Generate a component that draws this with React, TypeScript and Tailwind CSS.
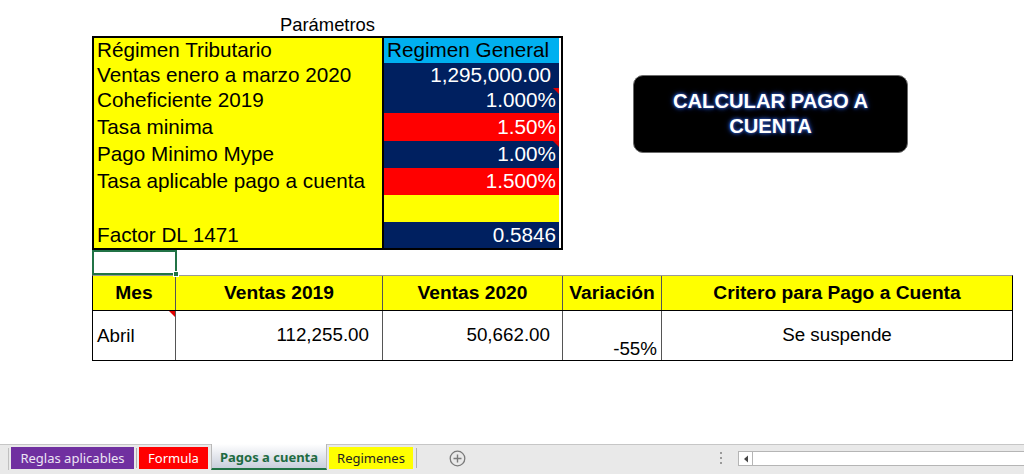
import React from "react";

type Row = {
  label: string;
  value: string;
  h: string;
  bg: string;
  fg: string;
  align: string;
  pr: string;
  comment?: boolean;
};

const rows: Row[] = [
  { label: "Régimen Tributario", value: "Regimen General", h: "h-[25px]", bg: "bg-[#00b0f0]", fg: "text-black", align: "justify-start pl-[3px]", pr: "" },
  { label: "Ventas enero a marzo 2020", value: "1,295,000.00", h: "h-[25px]", bg: "bg-[#002060]", fg: "text-white", align: "justify-end", pr: "pr-[8px]" },
  { label: "Coheficiente 2019", value: "1.000%", h: "h-[25px]", bg: "bg-[#002060]", fg: "text-white", align: "justify-end", pr: "pr-[3px]", comment: true },
  { label: "Tasa minima", value: "1.50%", h: "h-[28px]", bg: "bg-[#ff0000]", fg: "text-white", align: "justify-end", pr: "pr-[3px]" },
  { label: "Pago Minimo Mype", value: "1.00%", h: "h-[27px]", bg: "bg-[#002060]", fg: "text-white", align: "justify-end", pr: "pr-[3px]", comment: true },
  { label: "Tasa aplicable pago a cuenta", value: "1.500%", h: "h-[27px]", bg: "bg-[#ff0000]", fg: "text-white", align: "justify-end", pr: "pr-[3px]" },
  { label: "", value: "", h: "h-[27px]", bg: "bg-[#ffff00]", fg: "text-black", align: "justify-end", pr: "pr-[3px]" },
  { label: "Factor DL 1471", value: "0.5846", h: "h-[26px]", bg: "bg-[#002060]", fg: "text-white", align: "justify-end", pr: "pr-[3px]" },
];

function Comment() {
  return (
    <span className="absolute right-0 top-0 h-0 w-0 border-l-[6px] border-t-[6px] border-l-transparent border-t-[#e00000]" />
  );
}

export default function App() {
  return (
    <div
      className="relative flex h-[474px] w-[1024px] flex-col overflow-hidden bg-white text-black"
      style={{ fontFamily: '"Liberation Sans", Arial, sans-serif' }}
    >
      <div className="flex-1">
        {/* Top area */}
        <div className="flex items-start">
          <div className="ml-[92px] flex w-[471px] flex-col">
            <div className="flex h-[36px] items-center justify-center pt-[14px] text-[18.4px] leading-none">
              Parámetros
            </div>
            <div className="flex flex-col border-2 border-black">
              {rows.map((r, i) => (
                <div key={i} className={`flex ${r.h}`}>
                  <div className="flex w-[288px] items-center bg-[#ffff00] pl-[3px] text-[20.7px] leading-none whitespace-nowrap">
                    {r.label}
                  </div>
                  <div
                    className={`relative flex w-[177px] items-center border-l-2 border-black ${r.bg} ${r.fg} ${r.align} ${r.pr} text-[20.7px] leading-none whitespace-nowrap`}
                  >
                    {r.value}
                    {r.comment && <Comment />}
                  </div>
                </div>
              ))}
            </div>
          </div>

          <div className="ml-[70px] mt-[75px] flex h-[78px] w-[275px] flex-col items-center justify-center rounded-[10px] border border-[#6b6b6b] bg-black text-[20.2px] font-bold leading-[25px] text-white [text-shadow:0_0_2px_#1f3f8f,0_0_4px_#1f3f8f,0_0_6px_#1a3680,0_0_3px_#2a4da8]">
            <span>CALCULAR PAGO A</span>
            <span>CUENTA</span>
          </div>
        </div>

        {/* Selected cell */}
        <div className="relative ml-[92px] h-[25px] w-[85px] border-2 border-[#217346]">
          <span className="absolute -bottom-[4px] -right-[4px] h-[6px] w-[6px] border border-white bg-[#217346]" />
        </div>

        {/* Table */}
        <div className="ml-[92px] w-[921px] border-x border-b border-t border-x-black border-b-black border-t-[#9a9a9a]">
          <div className="flex h-[35px] border-b border-black bg-[#ffff00] text-[19.2px] font-bold leading-none">
            <div className="flex w-[83px] items-center justify-center border-r border-[#555]">Mes</div>
            <div className="flex w-[207px] items-center justify-center border-r border-[#555]">Ventas 2019</div>
            <div className="flex w-[180px] items-center justify-center border-r border-[#555]">Ventas 2020</div>
            <div className="flex w-[99px] items-center justify-center border-r border-[#555]">Variación</div>
            <div className="flex flex-1 items-center justify-center">Critero para Pago a Cuenta</div>
          </div>
          <div className="flex h-[49px] text-[18.8px] leading-none">
            <div className="relative flex w-[83px] items-center border-r border-[#555] pl-[4px] pt-[2px]">
              Abril
              <Comment />
            </div>
            <div className="flex w-[207px] items-center justify-end border-r border-[#555] pr-[13px]">112,255.00</div>
            <div className="flex w-[180px] items-center justify-end border-r border-[#555] pr-[12px]">50,662.00</div>
            <div className="flex w-[99px] items-end justify-end border-r border-[#555] pb-[1px] pr-[4px]">-55%</div>
            <div className="flex flex-1 items-center justify-center">Se suspende</div>
          </div>
        </div>
      </div>

      {/* Sheet tab bar */}
      <div
        className="flex h-[30px] items-start border-t border-[#c6c6c6] bg-[#e9e9e9] text-[13px] leading-none"
        style={{ fontFamily: '"Noto Sans", "Open Sans", sans-serif' }}
      >
        <div className="ml-[8px] mt-[3px] h-[22px] w-px bg-[#c0c0c0]" />
        <div className="ml-[2px] mt-[2px] flex h-[22px] w-[123px] items-center justify-center bg-[#7030a0] text-[#ece4f4]">
          Reglas aplicables
        </div>
        <div className="ml-[2px] mt-[3px] h-[20px] w-px bg-[#b0b0b0]" />
        <div className="ml-[2px] mt-[2px] flex h-[22px] w-[69px] items-center justify-center bg-[#ff0000] text-white">
          Formula
        </div>
        <div className="-mt-px ml-[3px] flex h-[26px] w-[116px] items-center justify-center border-x border-b-2 border-x-[#b8b8b8] border-b-[#217346] bg-gradient-to-b from-white to-[#c9cfdc] pt-[2px] font-bold text-[#1e6b42]">
          Pagos a cuenta
        </div>
        <div className="ml-[2px] mt-[2px] flex h-[22px] w-[84px] items-center justify-center bg-[#ffff00] text-[#222]">
          Regimenes
        </div>
        <div className="ml-[3px] mt-[3px] h-[20px] w-px bg-[#b0b0b0]" />
        <div className="ml-[32px] mt-[5px] flex h-[17px] w-[17px] items-center justify-center">
          <svg width="17" height="17" viewBox="0 0 17 17">
            <circle cx="8.5" cy="8.5" r="7.3" fill="none" stroke="#7a7a7a" strokeWidth="1.3" />
            <path d="M8.5 4.5v8M4.5 8.5h8" stroke="#7a7a7a" strokeWidth="1.4" />
          </svg>
        </div>
        <div className="ml-[254px] mt-[7px] flex flex-col gap-[3px]">
          <span className="h-[2px] w-[2px] bg-[#9a9a9a]" />
          <span className="h-[2px] w-[2px] bg-[#9a9a9a]" />
          <span className="h-[2px] w-[2px] bg-[#9a9a9a]" />
        </div>
        <div className="ml-[16px] mt-[6px] flex h-[15px] flex-1 border border-r-0 border-[#b5b5b5] bg-white">
          <div className="flex w-[14px] items-center justify-center border-r border-[#b5b5b5]">
            <svg width="6" height="8" viewBox="0 0 6 8">
              <path d="M5 0.5L1 4l4 3.5z" fill="#444" />
            </svg>
          </div>
        </div>
      </div>
    </div>
  );
}
